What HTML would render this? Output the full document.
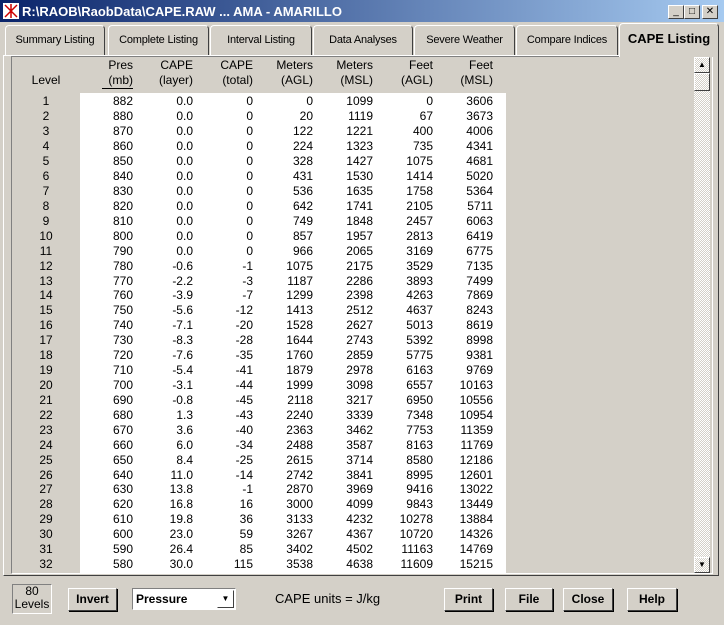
<!DOCTYPE html>
<html><head><style>
body{margin:0;width:724px;height:625px;background:#d4d0c8;font-family:"Liberation Sans",sans-serif;font-size:12px;position:relative;overflow:hidden}
.a{position:absolute}
.title{left:0;top:0;width:724px;height:22px;background:linear-gradient(90deg,#0a246a,#a6caf0);color:#fff;font-weight:bold;font-size:13px}
.tb{width:14px;height:12px;background:#d4d0c8;border:1px solid;border-color:#fff #404040 #404040 #fff;top:5px;font-size:10px;line-height:12px;text-align:center;color:#000}
.tab{top:25px;height:29px;border:1px solid;border-color:#fff #404040 #d4d0c8 #fff;border-radius:4px 4px 0 0;text-align:center;line-height:29px;color:#000;font-size:11px;letter-spacing:-0.2px}
.btn{height:21px;border:1px solid;border-color:#fff #404040 #404040 #fff;box-shadow:1px 1px 0 #000;text-align:center;line-height:21px;font-weight:bold;font-size:12px}
table{border-collapse:collapse;position:absolute;left:16px;top:94px}
td{height:14.93px;padding:0;text-align:right;line-height:14px;font-size:12px}
td:first-child{width:60px;text-align:center}
.w{position:absolute;left:80px;top:93px;width:426px;height:480px;background:#fff}
.h{position:absolute;text-align:right;width:60px;line-height:15px}
</style></head><body>
<div class="a title"><svg class="a" style="left:3px;top:3px" width="16" height="16"><rect width="16" height="16" fill="#fff"/><path d="M2 2L14 14M14 2L2 14M8 1L8 15" stroke="#c00" stroke-width="1.5"/></svg><span class="a" style="left:22px;top:4px">R:\RAOB\RaobData\CAPE.RAW ... AMA - AMARILLO</span></div>
<div class="a tb" style="left:668px">_</div><div class="a tb" style="left:684px">□</div><div class="a tb" style="left:702px">✕</div>
<div class="a tab" style="left:5px;width:98px">Summary Listing</div>
<div class="a tab" style="left:108px;width:99px">Complete Listing</div>
<div class="a tab" style="left:210px;width:100px">Interval Listing</div>
<div class="a tab" style="left:313px;width:98px">Data Analyses</div>
<div class="a tab" style="left:414px;width:99px">Severe Weather</div>
<div class="a tab" style="left:516px;width:100px">Compare Indices</div>
<div class="a tab" style="left:619px;width:98px;top:23px;height:33px;border-bottom:none;font-weight:bold;font-size:13px;letter-spacing:0;background:#d4d0c8;z-index:2">CAPE Listing</div>
<div class="a" style="left:3px;top:55px;width:716px;height:521px;border:1px solid;border-color:#fff #404040 #404040 #fff;box-sizing:border-box"></div>
<div class="a" style="left:11px;top:56px;width:702px;height:518px;border:1px solid;border-color:#808080 #fff #fff #808080;box-sizing:border-box"></div>
<div class="w"></div>
<div class="h" style="left:16px;top:73px;text-align:center">Level</div>
<div class="h" style="left:73px;top:58px">Pres<br>(mb)</div>
<div class="a" style="left:102px;top:88px;width:31px;height:1px;background:#000"></div>
<div class="h" style="left:133px;top:58px">CAPE<br>(layer)</div>
<div class="h" style="left:193px;top:58px">CAPE<br>(total)</div>
<div class="h" style="left:253px;top:58px">Meters<br>(AGL)</div>
<div class="h" style="left:313px;top:58px">Meters<br>(MSL)</div>
<div class="h" style="left:373px;top:58px">Feet<br>(AGL)</div>
<div class="h" style="left:433px;top:58px">Feet<br>(MSL)</div>
<table>
<colgroup><col style="width:60px"><col style="width:57px"><col style="width:60px"><col style="width:60px"><col style="width:60px"><col style="width:60px"><col style="width:60px"><col style="width:60px"></colgroup>
<tr><td>1</td><td>882</td><td>0.0</td><td>0</td><td>0</td><td>1099</td><td>0</td><td>3606</td></tr>
<tr><td>2</td><td>880</td><td>0.0</td><td>0</td><td>20</td><td>1119</td><td>67</td><td>3673</td></tr>
<tr><td>3</td><td>870</td><td>0.0</td><td>0</td><td>122</td><td>1221</td><td>400</td><td>4006</td></tr>
<tr><td>4</td><td>860</td><td>0.0</td><td>0</td><td>224</td><td>1323</td><td>735</td><td>4341</td></tr>
<tr><td>5</td><td>850</td><td>0.0</td><td>0</td><td>328</td><td>1427</td><td>1075</td><td>4681</td></tr>
<tr><td>6</td><td>840</td><td>0.0</td><td>0</td><td>431</td><td>1530</td><td>1414</td><td>5020</td></tr>
<tr><td>7</td><td>830</td><td>0.0</td><td>0</td><td>536</td><td>1635</td><td>1758</td><td>5364</td></tr>
<tr><td>8</td><td>820</td><td>0.0</td><td>0</td><td>642</td><td>1741</td><td>2105</td><td>5711</td></tr>
<tr><td>9</td><td>810</td><td>0.0</td><td>0</td><td>749</td><td>1848</td><td>2457</td><td>6063</td></tr>
<tr><td>10</td><td>800</td><td>0.0</td><td>0</td><td>857</td><td>1957</td><td>2813</td><td>6419</td></tr>
<tr><td>11</td><td>790</td><td>0.0</td><td>0</td><td>966</td><td>2065</td><td>3169</td><td>6775</td></tr>
<tr><td>12</td><td>780</td><td>-0.6</td><td>-1</td><td>1075</td><td>2175</td><td>3529</td><td>7135</td></tr>
<tr><td>13</td><td>770</td><td>-2.2</td><td>-3</td><td>1187</td><td>2286</td><td>3893</td><td>7499</td></tr>
<tr><td>14</td><td>760</td><td>-3.9</td><td>-7</td><td>1299</td><td>2398</td><td>4263</td><td>7869</td></tr>
<tr><td>15</td><td>750</td><td>-5.6</td><td>-12</td><td>1413</td><td>2512</td><td>4637</td><td>8243</td></tr>
<tr><td>16</td><td>740</td><td>-7.1</td><td>-20</td><td>1528</td><td>2627</td><td>5013</td><td>8619</td></tr>
<tr><td>17</td><td>730</td><td>-8.3</td><td>-28</td><td>1644</td><td>2743</td><td>5392</td><td>8998</td></tr>
<tr><td>18</td><td>720</td><td>-7.6</td><td>-35</td><td>1760</td><td>2859</td><td>5775</td><td>9381</td></tr>
<tr><td>19</td><td>710</td><td>-5.4</td><td>-41</td><td>1879</td><td>2978</td><td>6163</td><td>9769</td></tr>
<tr><td>20</td><td>700</td><td>-3.1</td><td>-44</td><td>1999</td><td>3098</td><td>6557</td><td>10163</td></tr>
<tr><td>21</td><td>690</td><td>-0.8</td><td>-45</td><td>2118</td><td>3217</td><td>6950</td><td>10556</td></tr>
<tr><td>22</td><td>680</td><td>1.3</td><td>-43</td><td>2240</td><td>3339</td><td>7348</td><td>10954</td></tr>
<tr><td>23</td><td>670</td><td>3.6</td><td>-40</td><td>2363</td><td>3462</td><td>7753</td><td>11359</td></tr>
<tr><td>24</td><td>660</td><td>6.0</td><td>-34</td><td>2488</td><td>3587</td><td>8163</td><td>11769</td></tr>
<tr><td>25</td><td>650</td><td>8.4</td><td>-25</td><td>2615</td><td>3714</td><td>8580</td><td>12186</td></tr>
<tr><td>26</td><td>640</td><td>11.0</td><td>-14</td><td>2742</td><td>3841</td><td>8995</td><td>12601</td></tr>
<tr><td>27</td><td>630</td><td>13.8</td><td>-1</td><td>2870</td><td>3969</td><td>9416</td><td>13022</td></tr>
<tr><td>28</td><td>620</td><td>16.8</td><td>16</td><td>3000</td><td>4099</td><td>9843</td><td>13449</td></tr>
<tr><td>29</td><td>610</td><td>19.8</td><td>36</td><td>3133</td><td>4232</td><td>10278</td><td>13884</td></tr>
<tr><td>30</td><td>600</td><td>23.0</td><td>59</td><td>3267</td><td>4367</td><td>10720</td><td>14326</td></tr>
<tr><td>31</td><td>590</td><td>26.4</td><td>85</td><td>3402</td><td>4502</td><td>11163</td><td>14769</td></tr>
<tr><td>32</td><td>580</td><td>30.0</td><td>115</td><td>3538</td><td>4638</td><td>11609</td><td>15215</td></tr>
</table>
<div class="a" style="left:694px;top:57px;width:16px;height:516px;background:repeating-conic-gradient(#fff 0 25%,#d4d0c8 0 50%) 0 0/2px 2px"></div>
<div class="a btn" style="left:694px;top:57px;width:14px;height:14px;line-height:14px;box-shadow:none;font-size:8px">▲</div>
<div class="a btn" style="left:694px;top:73px;width:14px;height:16px;box-shadow:none"></div>
<div class="a btn" style="left:694px;top:557px;width:14px;height:14px;line-height:14px;box-shadow:none;font-size:8px">▼</div>
<div class="a" style="left:12px;top:584px;width:38px;height:28px;border:1px solid;border-color:#808080 #fff #fff #808080;text-align:center;line-height:13px">80<br>Levels</div>
<div class="a btn" style="left:68px;top:588px;width:47px">Invert</div>
<div class="a" style="left:132px;top:588px;width:102px;height:20px;background:#fff;border:1px solid;border-color:#808080 #fff #fff #808080;font-weight:bold;line-height:20px;text-indent:3px">Pressure
<div class="a btn" style="right:1px;top:1px;width:15px;height:16px;line-height:16px;box-shadow:none;font-size:8px;text-indent:0">▼</div></div>
<div class="a" style="left:275px;top:591px;font-size:13px">CAPE units = J/kg</div>
<div class="a btn" style="left:444px;top:588px;width:47px">Print</div>
<div class="a btn" style="left:505px;top:588px;width:46px">File</div>
<div class="a btn" style="left:563px;top:588px;width:48px">Close</div>
<div class="a btn" style="left:627px;top:588px;width:48px">Help</div>
</body></html>
